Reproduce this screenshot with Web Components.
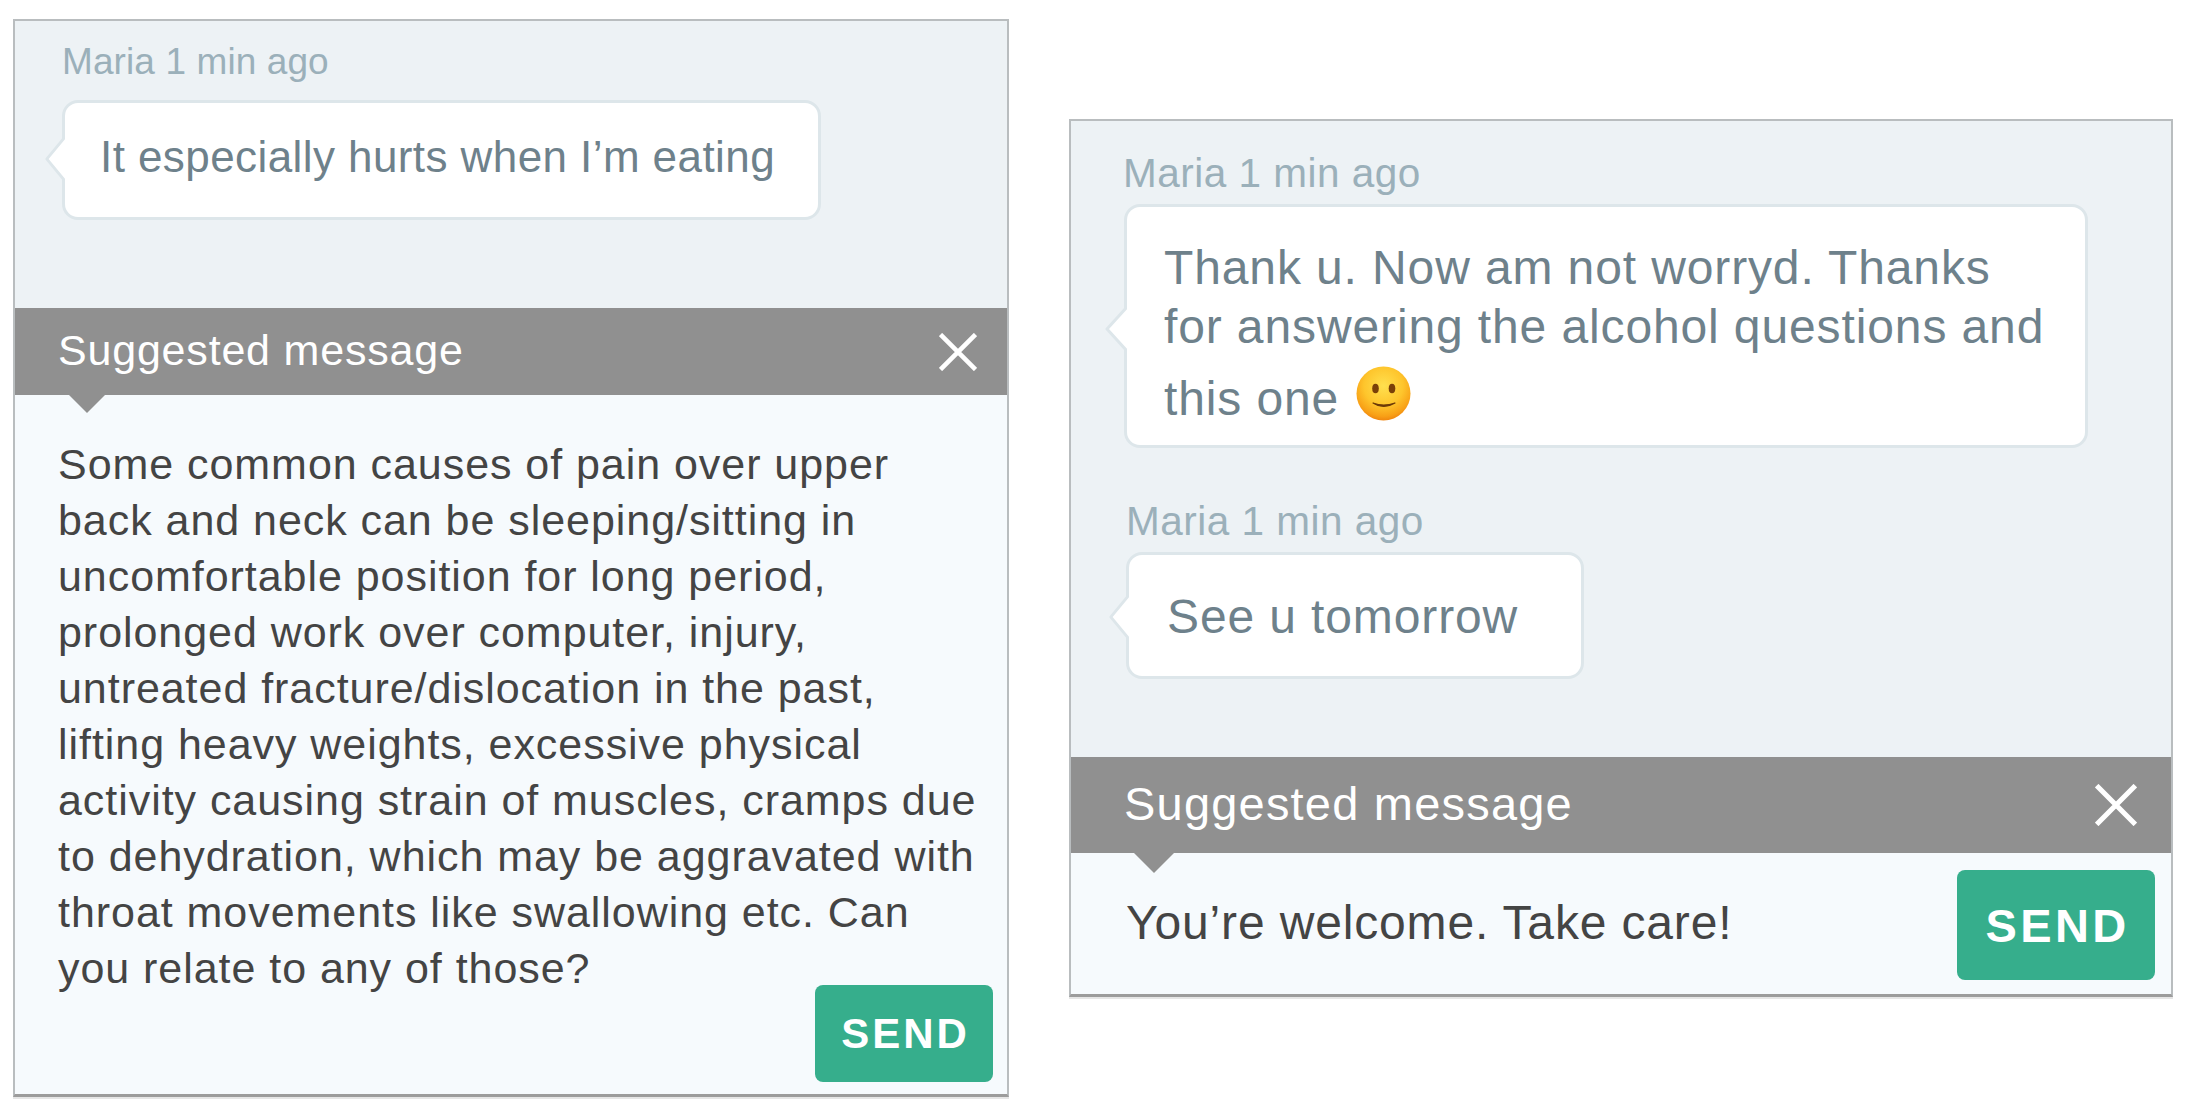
<!DOCTYPE html>
<html><head><meta charset="utf-8"><style>
html,body{margin:0;background:#fff}
body{width:2186px;height:1102px;overflow:hidden;font-family:"Liberation Sans",Arial,sans-serif}
.stage{display:flex;align-items:flex-start;padding-left:13px;gap:60px}
</style></head><body>
<div class="stage">
<chat-panel style="--w:996px;--mt:19px;--pad-x:47px;--area-h:287px;--area-pt:20px;--meta-size:37px;--meta-ls:0.1px;--meta-h:42px;--meta-mb:17px;--meta-ml:0px;--msg-size:44px;--msg-ls:0.42px">
  <chat-message style="--bw:759px;--bh:120px;--bp:35px;--tail:34px;--tw:20px;--lh:56px;--pt:26px">It especially hurts when I’m eating</chat-message>
  <suggested-message slot="suggestion" style="--bar-h:87px;--bar-pl:43px;--bar-pr:30px;--title-size:43px;--title-ls:0.8px;--x:38px;--ax:54px;--aw:36px;--ah:18px;--body-size:43px;--body-ls:0.95px;--body-lh:56px;--body-pad:41px 20px 98px 43px;--btn-w:178px;--btn-h:97px;--btn-m:0 14px 12px 0;--btn-size:42px;--btn-ls:3px">Some common causes of pain over upper<br>back and neck can be sleeping/sitting in<br>uncomfortable position for long period,<br>prolonged work over computer, injury,<br>untreated fracture/dislocation in the past,<br>lifting heavy weights, excessive physical<br>activity causing strain of muscles, cramps due<br>to dehydration, which may be aggravated with<br>throat movements like swallowing etc. Can<br>you relate to any of those?</suggested-message>
</chat-panel>
<chat-panel style="--w:1104px;--mt:119px;--pad-x:53px;--area-h:636px;--area-pt:29px;--meta-size:40.5px;--meta-ls:0.5px;--meta-h:46px;--meta-mb:8px;--meta-ml:-1px;--msg-size:48px;--msg-ls:0.88px">
  <chat-message style="--bw:964px;--bp:37px;--tail:100px;--tw:22px;--lh:59px;--pt:31px;--pb:16.5px;--gap:50px">Thank u. Now am not worryd. Thanks<br>for answering the alcohol questions and<br>this one <smile-emoji></smile-emoji></chat-message>
  <chat-message style="--bw:458px;--bh:127px;--bp:38px;--ml:2px;--meta-ml2:3px;--tail:40px;--tw:20px;--lh:59px;--pt:32px">See u tomorrow</chat-message>
  <suggested-message slot="suggestion" style="--bar-h:96px;--bar-pl:53px;--bar-pr:34px;--title-size:47px;--title-ls:1.2px;--x:42px;--ax:63px;--aw:40px;--ah:20px;--body-size:48px;--body-ls:0.85px;--body-lh:60px;--body-pad:40px 20px 41px 55px;--btn-w:198px;--btn-h:110px;--btn-m:0 16px 14px 0;--btn-size:47px;--btn-ls:3.3px">You’re welcome. Take care!</suggested-message>
</chat-panel>
</div>
<script>
function def(name, css, html){
  customElements.define(name, class extends HTMLElement{
    constructor(){super();
      const r=this.attachShadow({mode:'open'});
      r.innerHTML='<style>'+css+'</style>'+html;
    }
  });
}
def('chat-panel',`
  :host{display:flex;flex-direction:column;box-sizing:border-box;width:var(--w);margin-top:var(--mt);
    border:2px solid #b9bdbf;border-bottom-color:#9c9c9c;border-bottom-width:3px;background:#edf2f5;flex:none;box-shadow:0 2px 0 #e6e6e6}
  .msgs{box-sizing:border-box;height:var(--area-h);padding:var(--area-pt) 0 0 var(--pad-x);display:flex;flex-direction:column}
`,`<div class="msgs"><slot></slot></div><slot name="suggestion"></slot>`);

def('chat-message',`
  :host{display:block;margin-left:var(--ml,0);margin-bottom:var(--gap,0)}
  .meta{height:var(--meta-h);line-height:var(--meta-h);margin-bottom:var(--meta-mb);margin-left:calc(var(--meta-ml) - var(--ml,0px) + var(--meta-ml2,0px));
    font-size:var(--meta-size);letter-spacing:var(--meta-ls);color:#9bb0ba;white-space:nowrap}
  .bubble{position:relative;box-sizing:border-box;width:var(--bw);min-height:var(--bh,0);background:#fff;
    border:3px solid #dde6ea;border-radius:16px;padding:var(--pt) 20px var(--pb,0) var(--bp);
    font-size:var(--msg-size);letter-spacing:var(--msg-ls);line-height:var(--lh);color:#6e818b;white-space:nowrap}
  svg{position:absolute;left:calc(var(--tw) * -1);top:var(--tail);width:var(--tw);height:44px;display:block}
`,`<div class="meta">Maria 1 min ago</div><div class="bubble"><svg viewBox="0 0 22 44" preserveAspectRatio="none"><path d="M22 0 L2 22 L22 44 Z" fill="#fff"/><path d="M22 0 L2 22 L22 44" fill="none" stroke="#dde6ea" stroke-width="3" stroke-linejoin="round"/></svg><slot></slot></div>`);

def('smile-emoji',`
  :host{display:inline-block;width:55px;height:55px;vertical-align:-6px;margin-top:10px;margin-left:3px}
  svg{display:block;width:55px;height:55px}
`,`<svg viewBox="0 0 55 55"><defs><radialGradient id="g" cx="50%" cy="36%" r="66%"><stop offset="0" stop-color="#ffe04f"/><stop offset=".55" stop-color="#fec52c"/><stop offset=".85" stop-color="#f8a016"/><stop offset="1" stop-color="#ee7f0c"/></radialGradient></defs>
<circle cx="27.5" cy="27.5" r="27" fill="url(#g)"/>
<ellipse cx="19.5" cy="22.5" rx="3.3" ry="4.7" fill="#7a4008"/><ellipse cx="36" cy="22.5" rx="3.3" ry="4.7" fill="#7a4008"/>
<path d="M17 37 Q27.5 44 39 37 Q27.5 41 17 37Z" fill="#6d3a08" stroke="#6d3a08" stroke-width="1.2" stroke-linejoin="round"/></svg>`);

def('suggested-message',`
  :host{display:block;position:relative;font-family:inherit}
  .bar{box-sizing:border-box;height:var(--bar-h);padding:0 var(--bar-pr) 0 var(--bar-pl);background:#909090;display:flex;align-items:center;justify-content:space-between;
    color:#fff;font-size:var(--title-size);letter-spacing:var(--title-ls)}
  .bar span{padding-bottom:3px}
  .bar svg{width:var(--x);height:var(--x);display:block;flex:none}
  .arrow{position:absolute;left:var(--ax);top:var(--bar-h);width:0;height:0;border-left:calc(var(--aw)/2) solid transparent;border-right:calc(var(--aw)/2) solid transparent;border-top:var(--ah) solid #909090}
  .body{display:grid;background:#f6fafd}
  .text{grid-area:1/1;padding:var(--body-pad);font-size:var(--body-size);letter-spacing:var(--body-ls);line-height:var(--body-lh);color:#444;white-space:nowrap}
  send-button{grid-area:1/1;justify-self:end;align-self:end;margin:var(--btn-m)}
`,`<div class="bar"><span>Suggested message</span><svg viewBox="0 0 38 38"><path d="M1.5 1.5 L36.5 36.5 M36.5 1.5 L1.5 36.5" stroke="#fff" stroke-width="4.6" fill="none"/></svg></div><div class="arrow"></div><div class="body"><div class="text"><slot></slot></div><send-button>SEND</send-button></div>`);

def('send-button',`
  :host{display:flex;align-items:center;justify-content:center;box-sizing:border-box;width:var(--btn-w);height:var(--btn-h);padding-left:3px;background:#36ae8c;border-radius:8px;
    color:#fff;font-weight:700;font-size:var(--btn-size);letter-spacing:var(--btn-ls)}
`,`<slot></slot>`);
</script>
</body></html>
